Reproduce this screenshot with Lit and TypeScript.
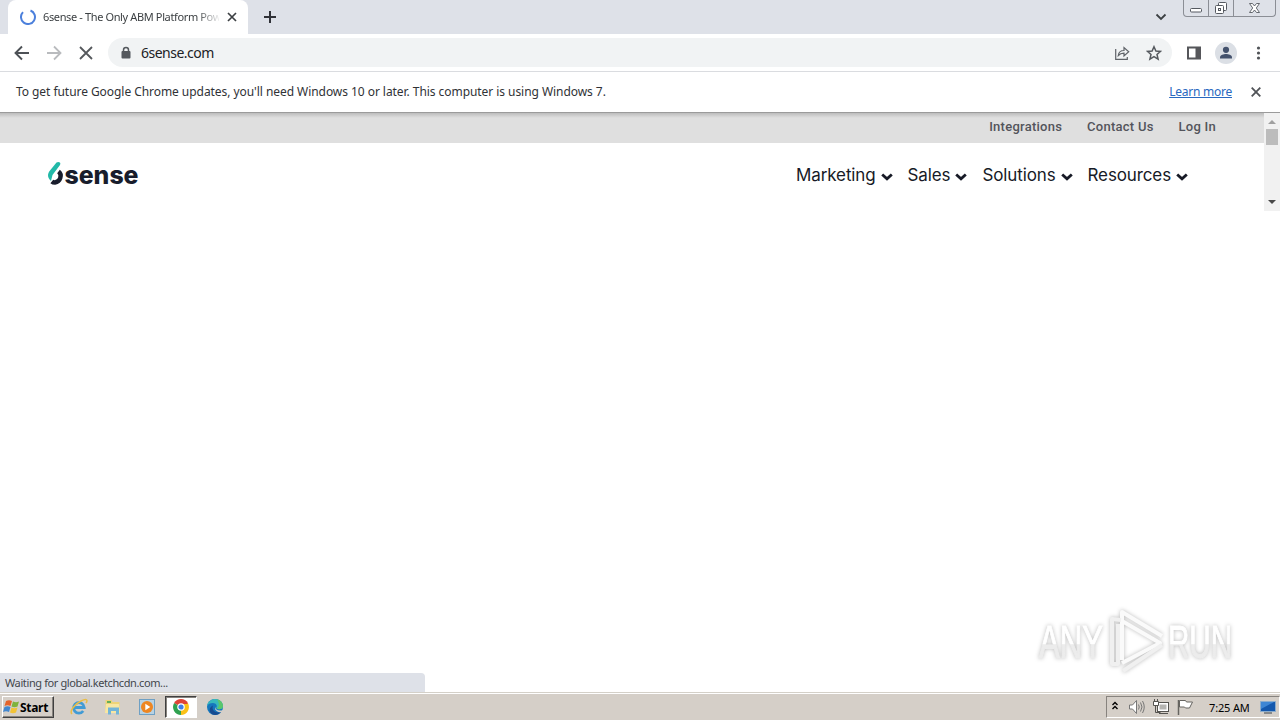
import { LitElement, html, css } from "lit";
import { customElement } from "lit/decorators.js";

// tab strip with the window buttons
@customElement("tab-strip")
export class TabStrip extends LitElement {
  static styles = css`
    :host {
      display: flex;
      height: 34px;
      background: #dee1e8;
    }
    .tab {
      display: flex;
      align-items: center;
      box-sizing: border-box;
      width: 240px;
      margin-left: 8px;
      padding-left: 12px;
      background: #fff;
      border-radius: 8px 8px 0 0;
    }
    .title {
      width: 176px;
      margin: -2px 0 0 7px;
      overflow: hidden;
      white-space: nowrap;
      font-family: "Noto Sans", sans-serif;
      font-size: 11px;
      letter-spacing: -0.37px;
      color: #3c4043;
      -webkit-mask-image: linear-gradient(to right, #000 154px, transparent 178px);
    }
    .close {
      margin-left: 8px;
    }
    .plus {
      margin: 10px 0 0 15px;
    }
    .search {
      margin: 13px 16px 0 auto;
    }
    .buttons {
      display: flex;
      box-sizing: border-box;
      width: 93px;
      height: 17px;
      margin-right: 4px;
      border: 1px solid #8b8e95;
      border-top: 0;
      border-radius: 0 0 4px 4px;
    }
    .buttons svg {
      border-right: 1px solid #8b8e95;
    }
    .buttons svg:last-child {
      border: 0;
    }
  `;

  render() {
    return html`
      <div class="tab">
        <svg width="16" height="16" fill="none" stroke="#4c80dc" stroke-width="2">
          <path d="M10.5 1.5A7 7 0 1 1 3 3.1" />
        </svg>
        <span class="title">6sense - The Only ABM Platform Pow</span>
        <svg class="close" width="10" height="10" stroke="#3c4043" stroke-width="1.7">
          <path d="M1 1l8 8M9 1l-8 8" />
        </svg>
      </div>
      <svg class="plus" width="14" height="14" stroke="#303238" stroke-width="2">
        <path d="M7 1v12M1 7h12" />
      </svg>
      <svg class="search" width="12" height="8" fill="none" stroke="#3c4043" stroke-width="1.8">
        <path d="M1.5 1.5L6 6l4.5-4.5" />
      </svg>
      <div class="buttons">
        <svg width="24" height="16" fill="#fff" stroke="#555960">
          <rect x="6.5" y="8.5" width="11" height="3.5" rx="1" />
        </svg>
        <svg width="24" height="16" fill="#fff" stroke="#555960">
          <rect x="9.5" y="2.5" width="8" height="8" rx="1" />
          <rect x="6.5" y="5.5" width="8" height="8" rx="1" />
          <rect x="9.5" y="8.5" width="2" height="2" />
        </svg>
        <svg width="41" height="16" fill="#fff" stroke="#555960" stroke-width=".9">
          <path d="M15.5 3.5h3l2 2.500 2-2.500h3l-3.200 4.500 3.200 4.500h-3l-2-2.500-2 2.500h-3l3.200-4.500z" />
        </svg>
      </div>
    `;
  }
}

// back, forward, stop and the address field
@customElement("tool-bar")
export class ToolBar extends LitElement {
  static styles = css`
    :host {
      display: flex;
      align-items: center;
      box-sizing: border-box;
      height: 38px;
      padding: 0 13px 0 14px;
      background: #fff;
      border-bottom: 1px solid #dadce0;
      font-family: "Noto Sans", sans-serif;
    }
    .nav {
      display: flex;
      gap: 16px;
      width: 94px;
    }
    .omnibox {
      display: flex;
      align-items: center;
      box-sizing: border-box;
      width: 1064px;
      height: 29px;
      padding: 0 10px 0 12px;
      border-radius: 15px;
      background: #f1f3f4;
    }
    .url {
      flex: 1;
      margin-left: 9px;
      font-size: 14px;
      letter-spacing: -0.5px;
      color: #202124;
    }
    .actions {
      display: flex;
      gap: 16px;
    }
    .right {
      display: flex;
      align-items: center;
      margin-left: 14px;
    }
    .avatar {
      margin: 0 13px;
    }
  `;

  render() {
    return html`
      <div class="nav">
        <svg width="16" height="16" fill="none" stroke="#4d5156" stroke-width="1.9">
          <path d="M15 8H2M8 1.5L1.5 8 8 14.5" />
        </svg>
        <svg width="16" height="16" fill="none" stroke="#b9bbbe" stroke-width="1.8">
          <path d="M1 8h13M8 1.5L14.5 8 8 14.5" />
        </svg>
        <svg width="16" height="16" fill="none" stroke="#55585c" stroke-width="1.8">
          <path d="M2 2l12 12M14 2L2 14" />
        </svg>
      </div>
      <div class="omnibox">
        <svg width="12" height="14">
          <path d="M3.5 6V4a2.5 2.5 0 0 1 5 0v2" fill="none" stroke="#55595e" stroke-width="1.5" />
          <rect x="1.5" y="5" width="9" height="7.5" rx="1" fill="#55595e" />
        </svg>
        <span class="url">6sense.com</span>
        <div class="actions">
          <svg width="16" height="16" fill="none" stroke="#5f6368" stroke-width="1.2">
            <path d="M1.7 4v10.300h11.600V12" />
            <path d="M4.3 10.500c.4-3.500 2.600-5 5.700-5V2.500l4.700 4.200L10 11V8.200c-2.500 0-4.300.7-5.700 2.300z" />
          </svg>
          <svg width="16" height="16" fill="none" stroke="#55595e" stroke-width="1.5">
            <path d="M8 1.700l1.900 4.300 4.600.4-3.500 3.100 1.100 4.600L8 11.700l-4.100 2.400L5 9.500 1.500 6.400l4.600-.4z" />
          </svg>
        </div>
      </div>
      <div class="right">
        <svg width="16" height="16">
          <path d="M1 1.500h14v13H1zM3 3.500v9h6.500v-9z" fill="#55565a" fill-rule="evenodd" />
        </svg>
        <svg class="avatar" width="22" height="22" fill="#44526d">
          <circle cx="11" cy="11" r="11" fill="#dbdfe5" />
          <circle cx="11" cy="7.8" r="3.1" />
          <path d="M5 16.500v-1.300c0-2.200 3.700-3.200 6-3.200s6 1 6 3.200v1.300z" />
        </svg>
        <svg width="16" height="16" fill="#505357">
          <circle cx="8.5" cy="3" r="1.6" />
          <circle cx="8.5" cy="8" r="1.6" />
          <circle cx="8.5" cy="13" r="1.6" />
        </svg>
      </div>
    `;
  }
}

// message about the operating system
@customElement("info-bar")
export class InfoBar extends LitElement {
  static styles = css`
    :host {
      display: flex;
      align-items: center;
      box-sizing: border-box;
      height: 41px;
      padding: 0 19px 1px 16px;
      background: #fff;
      border-bottom: 1px solid #9b9b9b;
      font-family: "Noto Sans", sans-serif;
      font-size: 12px;
      color: #303236;
    }
    .message {
      flex: 1;
      white-space: nowrap;
      letter-spacing: -0.055px;
    }
    .link {
      color: #2868c0;
      text-decoration: underline;
      letter-spacing: -0.24px;
    }
    .close {
      margin-left: 19px;
    }
  `;

  render() {
    return html`
      <span class="message"
        >To get future Google Chrome updates, you'll need Windows 10 or later. This computer is using Windows 7.</span
      >
      <span class="link">Learn more</span>
      <svg class="close" width="10" height="10" stroke="#505357" stroke-width="1.8">
        <path d="M.7 .7l8.6 8.6M9.3 .7L.7 9.3" />
      </svg>
    `;
  }
}

// the web page, with its own scrollbar
@customElement("site-header")
export class SiteHeader extends LitElement {
  static styles = css`
    :host {
      display: flex;
      height: 98px;
      font-family: Inter, sans-serif;
    }
    .page {
      flex: 1;
    }
    .top {
      display: flex;
      gap: 25px;
      justify-content: flex-end;
      box-sizing: border-box;
      height: 30px;
      padding: 6px 48px 0 0;
      background: linear-gradient(#bcbcbc, #d2d2d2 3px, #dfdfdf 5px);
      font-family: Roboto, sans-serif;
      font-size: 13px;
      font-weight: 500;
      line-height: 16px;
      letter-spacing: 0.25px;
      color: #53545b;
    }
    .menu {
      display: flex;
      align-items: center;
      box-sizing: border-box;
      height: 64px;
      padding: 0 76px 0 47px;
      color: #171a26;
    }
    .logo {
      flex: 1;
    }
    .logo svg {
      display: block;
    }
    .logo text {
      font-family: Inter, sans-serif;
      font-size: 25px;
      font-weight: 800;
    }
    .item {
      display: flex;
      align-items: center;
      margin-left: 15px;
      font-size: 17px;
      letter-spacing: -0.12px;
    }
    .item svg {
      margin: 3px 0 0 5px;
    }
    .scroll {
      display: flex;
      flex-direction: column;
      align-items: center;
      width: 16px;
      background: #f1f1f1;
    }
    .thumb {
      width: 12px;
      height: 16px;
      margin: 1px 0 auto;
      background: #bcbcbc;
    }
  `;

  render() {
    return html`
      <div class="page">
        <div class="top">
          <span>Integrations</span><span>Contact Us</span><span>Log In</span>
        </div>
        <div class="menu">
          <div class="logo">
            <svg width="94" height="28">
              <path d="M9.500 1.500c2-1.500 5 0 3.500 2.500L5.500 14 4 20C.5 17 0 13 3 9.500z" fill="#22b9a8" />
              <path d="M11.500 10.500c4 3 2 10.500-3.500 11q-2 0-3.200-1" fill="none" stroke="#181d2c" stroke-width="4.4" />
              <text x="17.5" y="23" textLength="74" lengthAdjust="spacingAndGlyphs" fill="#181d2c">sense</text>
            </svg>
          </div>
          ${["Marketing", "Sales", "Solutions", "Resources"].map(
            (name) => html`
              <div class="item">
                <span>${name}</span>
                <svg width="12" height="8" fill="none" stroke="#171a26" stroke-width="2.8">
                  <path d="M1.200 1.500L6 5.900l4.800-4.400" />
                </svg>
              </div>
            `
          )}
        </div>
      </div>
      <div class="scroll">
        <svg width="16" height="15"><path d="M4 11l4-4 4 4z" fill="#a0a0a0" /></svg>
        <div class="thumb"></div>
        <svg width="16" height="17"><path d="M4 6h8l-4 4z" fill="#484848" /></svg>
      </div>
    `;
  }
}

// Windows taskbar
@customElement("task-bar")
export class TaskBar extends LitElement {
  static styles = css`
    :host {
      display: flex;
      box-sizing: border-box;
      height: 28px;
      padding: 3px 0 0 2px;
      border-top: 1px solid #d4d0c8;
      background: linear-gradient(#fff 1px, #d5cfc8 1px);
      font-family: "Noto Sans", sans-serif;
      font-size: 11px;
      color: #000;
    }
    .start {
      display: flex;
      align-items: center;
      box-sizing: border-box;
      width: 52px;
      height: 22px;
      border: 1px solid;
      border-color: #fff #404040 #404040 #fff;
      box-shadow: inset -1px -1px #87837e;
      font-weight: 700;
      font-size: 12px;
      letter-spacing: -0.3px;
    }
    .icons {
      display: flex;
      align-items: center;
      height: 22px;
      margin-left: 8px;
    }
    .slot {
      display: flex;
      align-items: center;
      justify-content: center;
      box-sizing: border-box;
      width: 34px;
      height: 22px;
    }
    .active {
      width: 32px;
      margin: 0 1px;
      background: #fff;
      border: 1px solid;
      border-color: #404040 #fff #fff #404040;
      box-shadow: inset 1px 1px #87837e;
    }
    .tray {
      display: flex;
      align-items: center;
      box-sizing: border-box;
      width: 174px;
      height: 22px;
      margin-left: auto;
      padding-left: 4px;
      border: 1px solid;
      border-color: #87837e #fff #fff #87837e;
    }
    .tray svg {
      flex: none;
    }
    .tray .volume {
      margin-left: 6px;
    }
    .network {
      margin-left: 1px;
    }
    .clock {
      width: 51px;
      margin-left: 13px;
      white-space: nowrap;
      letter-spacing: -0.15px;
    }
  `;

  render() {
    return html`
      <div class="start">
        <svg width="17" height="18">
          <path d="M3 3c2-1 4-1 6 0L7.500 8c-2-1-4-1-6 0z" fill="#e5642b" />
          <path d="M10 3.500c2 1 4 1 6 0L14.500 8.500c-2 1-4 1-6 0z" fill="#7fb33c" />
          <path d="M1.500 9c2-1 4-1 6 0L6 14c-2-1-4-1-6 0z" fill="#4287cf" />
          <path d="M8.500 9.500c2 1 4 1 6 0L13 14.500c-2 1-4 1-6 0z" fill="#f2c336" />
        </svg>
        Start
      </div>
      <div class="icons">
        <div class="slot">
          <svg width="18" height="18" fill="none">
            <path d="M4.500 9.500h9.700a5.300 5.300 0 1 0-1 3.500" stroke="#419bd5" stroke-width="2.8" />
            <path d="M2 16C-1 13 5 6 11 3s7-1 5 2" stroke="#e9bd46" stroke-width="1.5" />
          </svg>
        </div>
        <div class="slot">
          <svg width="18" height="18">
            <path d="M1.500 2h6l1 2h7v11h-14z" fill="#eed477" />
            <path d="M3 3h4v2H3z" fill="#64ae59" />
            <path d="M2 6h13l1 9H1z" fill="#f8e7a2" />
            <path d="M4 9.500h11v7h-3v-3.500H7v3.500H4z" fill="#73b5d8" />
          </svg>
        </div>
        <div class="slot">
          <svg width="18" height="18">
            <rect x="1.5" y="1.5" width="15" height="15" fill="#b8d2e3" stroke="#6fa0c4" />
            <circle cx="9" cy="9" r="6" fill="#ee8622" />
            <path d="M7.300 5.800v6.400l5-3.200z" fill="#fff" />
          </svg>
        </div>
        <div class="slot active">
          <svg width="16" height="16" fill="none">
            <path d="M8 8L1.100 4A8 8 0 0 1 14.900 4z" fill="#df4437" />
            <path d="M8 8l6.900-4A8 8 0 0 1 8 16z" fill="#fbc116" />
            <path d="M8 8v8A8 8 0 0 1 1.100 4z" fill="#2fa150" />
            <path d="M8 4.300h7.100l-3.500 6z" fill="#fbc116" />
            <path d="M1.100 4H15l-1 1H8z" fill="#df4437" />
            <circle cx="8" cy="8" r="3.2" fill="#3e7fe8" stroke="#fff" stroke-width="1.2" />
          </svg>
        </div>
        <div class="slot">
          <svg width="18" height="18">
            <circle cx="9" cy="9" r="8" fill="#1577bd" />
            <path d="M1 8C2 3 6 1 9 1c5 0 8 4 8 7 0 4-5 4-7 2 2-2 0-5-3-5-3 0-5 1-6 3z" fill="#36b9bc" />
            <path d="M11 1.300c4 1 6 4 6 7 0 3-4 3.500-6 2.500 3-3 2-6 0-9.500z" fill="#5ac66c" />
            <path d="M7 7.500c-2 5 3 8 8 6.500-3 4-9 4-11 0-1-3 0-5 3-6.500z" fill="#174b90" />
            <path d="M9.500 9c-.5 3 3 4.500 8 3v2c-4 1-10-1-8-5z" fill="#d5cfc8" />
          </svg>
        </div>
      </div>
      <div class="tray">
        <svg width="8" height="12" fill="none" stroke="#000" stroke-width="1.4">
          <path d="M1.500 4L4 1.500 6.500 4M1.500 8L4 5.500 6.500 8" />
        </svg>
        <svg class="volume" width="24" height="18" fill="none" stroke="#777">
          <path d="M4.500 7h3l4-4.500v13l-4-4.500h-3z" fill="#fff" />
          <path d="M13.500 6.500q1.500 2.500 0 5M15.500 4.500q3 4.500 0 9M17.500 3q3.500 6 0 12" />
        </svg>
        <svg class="network" width="24" height="18" fill="#fff" stroke="#55534f">
          <rect x="7.5" y="4.5" width="11" height="9" />
          <rect x="9.5" y="6.5" width="7" height="5" fill="#b5b4b1" stroke="none" />
          <path d="M9 15.500h9M5.500 7v7.500h5" fill="none" />
          <path d="M3.500 3.500h5v4h-5zM4.500 1v2M7.500 1v2" />
        </svg>
        <svg width="22" height="18" fill="#fff" stroke="#666460">
          <path d="M4.500 2v15" stroke-width="1.5" />
          <path d="M5.500 2.500h6l1 1.500h6l-3 6h-4l-1-1h-5z" />
        </svg>
        <span class="clock">7:25 AM</span>
        <svg width="16" height="16">
          <path d="M.5 2.500h15v10H.5z" fill="#1458ad" stroke="#8baccc" />
          <path d="M1 3h13L1 10z" fill="#3e86d4" />
          <path d="M4 14h8" stroke="#39434d" />
        </svg>
      </div>
    `;
  }
}

@customElement("app-root")
export class AppRoot extends LitElement {
  static styles = css`
    :host {
      display: flex;
      flex-direction: column;
      position: relative;
      width: 1280px;
      height: 720px;
      overflow: hidden;
      background: #fff;
    }
    .content {
      display: flex;
      flex: 1;
      align-items: flex-end;
    }
    .status {
      box-sizing: border-box;
      width: 425px;
      height: 19px;
      padding-left: 5px;
      border-radius: 0 4px 0 0;
      background: #dee1e8;
      font: 11px/20px "Noto Sans", sans-serif;
      letter-spacing: -0.39px;
      color: #43464b;
    }
    /* lies over the page */
    .watermark {
      position: absolute;
      left: 1030px;
      top: 604px;
      filter: drop-shadow(0 0 2px #bbb);
    }
    .watermark text {
      font: 46px "Liberation Sans", sans-serif;
      stroke: url(#fade);
      stroke-width: 1;
    }
  `;

  render() {
    return html`
      <tab-strip></tab-strip>
      <tool-bar></tool-bar>
      <info-bar></info-bar>
      <site-header></site-header>
      <div class="content">
        <div class="status">Waiting for global.ketchcdn.com...</div>
      </div>
      <task-bar></task-bar>
      <svg class="watermark" width="220" height="74" fill="url(#fade)">
        <defs>
          <linearGradient id="fade" x2="0" y2="1">
            <stop offset=".54" stop-color="#fff" />
            <stop offset=".55" stop-color="#ececec" />
          </linearGradient>
        </defs>
        <text x="9" y="54" textLength="64" lengthAdjust="spacingAndGlyphs">ANY</text>
        <text x="138" y="54" textLength="64" lengthAdjust="spacingAndGlyphs">RUN</text>
        <g fill="none" stroke="#fafafa" stroke-width="4" stroke-linejoin="round">
          <path d="M92 56V8l40 24M92 17l38 22-38 20" />
          <path d="M91 16l-9-1v45h6V20M93 67l39-26" stroke="#f0f0f0" />
        </g>
      </svg>
    `;
  }
}
